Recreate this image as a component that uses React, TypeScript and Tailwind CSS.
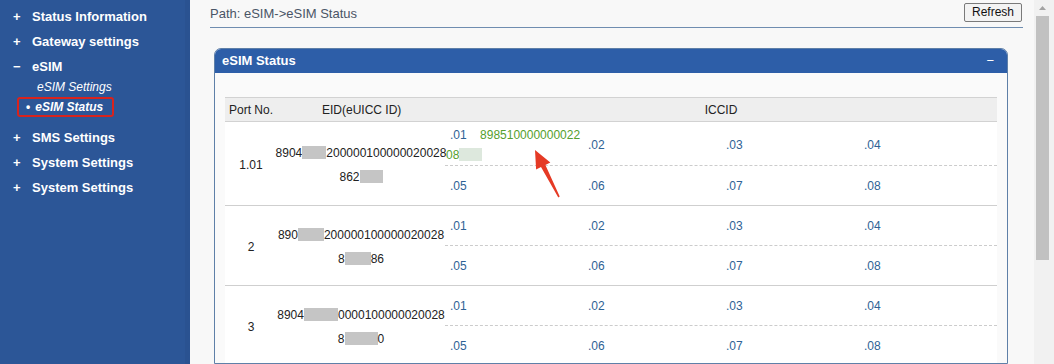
const font = { fontFamily: '"Liberation Sans", Arial, sans-serif' };

const NavItem = ({ sign, label }: { sign: string; label: string }) => (
  <div className="flex h-[25px] items-center pl-[13px] text-[13px] font-bold text-white">
    <span className="w-[19px]">{sign}</span>
    <span>{label}</span>
  </div>
);

const Blur = ({ w, light }: { w: number; light?: boolean }) => (
  <span
    className={`inline-block h-[13px] align-[-2px] ${light ? 'bg-[#dde8dd]' : 'bg-[#c5c5c5]'}`}
    style={{ width: w }}
  />
);

const Slot = ({ n }: { n: string }) => <div className="pl-[5px] text-[#2e6295]">.{n}</div>;

const Row = ({
  port,
  line1,
  line2,
  first,
}: {
  port: string;
  line1: React.ReactNode;
  line2: React.ReactNode;
  first?: boolean;
}) => (
  <div className="grid grid-cols-[52px_168px_1fr] border-b border-[#cfcfcf] bg-white text-[12px] text-[#222]">
    <div className="flex items-center justify-center pt-[2px]">{port}</div>
    <div className="flex flex-col items-center justify-center pt-[2px] leading-[24px]">
      <div className="whitespace-nowrap">{line1}</div>
      <div className="whitespace-nowrap">{line2}</div>
    </div>
    <div className="flex flex-col leading-[20px]">
      <div
        className={`grid grid-cols-4 items-center border-b border-dashed border-[#cccccc] ${first ? 'min-h-[42px] pt-[3px]' : 'min-h-[40px] pt-px'}`}
      >
        {first ? (
          <div className="pl-[5px] text-[#2e6295]">
            .01&nbsp;&nbsp;&nbsp;&nbsp;<span className="text-[#55a02e]">898510000000022</span>
            <br />
            <span className="relative -left-[4px] text-[#55a02e]">
              08
              <Blur w={23} light />
            </span>
          </div>
        ) : (
          <Slot n="01" />
        )}
        <Slot n="02" />
        <Slot n="03" />
        <Slot n="04" />
      </div>
      <div className="grid min-h-[39px] grid-cols-4 items-center pt-px">
        <Slot n="05" />
        <Slot n="06" />
        <Slot n="07" />
        <Slot n="08" />
      </div>
    </div>
  </div>
);

export default function App() {
  return (
    <div className="relative flex h-[364px] w-[1054px] overflow-hidden bg-[#f8f8f8]" style={font}>
      {/* sidebar */}
      <div className="w-[190px] shrink-0 border-r-[5px] border-[#2a5291] bg-[#2c5697] pt-[4px]">
        <NavItem sign="+" label="Status Information" />
        <NavItem sign="+" label="Gateway settings" />
        <NavItem sign="−" label="eSIM" />
        <div className="-mt-[1px] h-[19px] pl-[37px] text-[12px] italic leading-[19px] text-white">eSIM Settings</div>
        <div className="ml-[17px] flex h-[20px] w-[97px] items-center rounded-[3px] border-2 border-[#d8231d] pl-[7px] text-[12px] font-bold italic text-white">
          <span className="mr-[5px] not-italic">•</span>
          eSIM Status
        </div>
        <div className="mt-[8px]">
          <NavItem sign="+" label="SMS Settings" />
          <NavItem sign="+" label="System Settings" />
          <NavItem sign="+" label="System Settings" />
        </div>
      </div>

      {/* main */}
      <div className="flex min-w-0 flex-1 flex-col">
        <div className="ml-[20px] mr-[11px] flex h-[28px] justify-between border-b border-[#6f8db0]">
          <div className="flex h-[27px] items-center text-[13px] text-[#4a5566]">Path: eSIM-&gt;eSIM Status</div>
          <button className="mr-px mt-[3px] h-[19px] rounded-[2px] border border-[#7a7a7a] bg-[#f3f3f3] px-[7px] text-[12px] leading-[17px] text-[#111]">
            Refresh
          </button>
        </div>

        <div className="ml-[24px] mr-[26px] mt-[20px] overflow-hidden rounded-t-[7px] border border-[#5f80a8] bg-[#fafafa]">
          <div className="flex h-[24px] items-center justify-between bg-[#2d5ea8] pl-[7px] pr-[13px] text-[13px] font-bold text-white">
            <span>eSIM Status</span>
            <span className="font-normal">−</span>
          </div>
          <div className="px-[10px] pt-[24px]">
            <div className="grid h-[25px] grid-cols-[52px_168px_1fr] items-center border-y border-[#d2d2d2] bg-[#eeeeee] text-[12px] text-[#222]">
              <div className="pl-[4px]">Port No.</div>
              <div className="pl-[45px]">EID(eUICC ID)</div>
              <div className="text-center">ICCID</div>
            </div>
            <Row
              first
              port="1.01"
              line1={
                <>
                  8904
                  <Blur w={24} />
                  200000100000020028
                </>
              }
              line2={
                <>
                  862
                  <Blur w={23} />
                </>
              }
            />
            <Row
              port="2"
              line1={
                <>
                  890
                  <Blur w={26} />
                  200000100000020028
                </>
              }
              line2={
                <>
                  8<Blur w={26} />
                  86
                </>
              }
            />
            <Row
              port="3"
              line1={
                <>
                  8904
                  <Blur w={34} />
                  0000100000020028
                </>
              }
              line2={
                <>
                  8<Blur w={33} />0
                </>
              }
            />
          </div>
        </div>
      </div>

      {/* scrollbar */}
      <div className="flex w-[20px] shrink-0 flex-col bg-[#f1f1f1] pl-[2px]">
        <div className="flex h-[16px] w-[13px] items-center justify-center">
          <svg width="7" height="4" viewBox="0 0 7 4">
            <path d="M0 4 L3.5 0 L7 4 Z" fill="#a3a3a3" />
          </svg>
        </div>
        <div className="h-[244px] w-[13px] bg-[#c1c1c1]" />
      </div>

      {/* annotation arrow */}
      <svg className="pointer-events-none absolute left-0 top-0" width="1054" height="364">
        <polygon
          points="535,150 550.3,162.4 545.4,164.9 559.7,196.6 558.3,197.4 541,167.1 536.1,169.6"
          fill="#e53a25"
        />
      </svg>
    </div>
  );
}
